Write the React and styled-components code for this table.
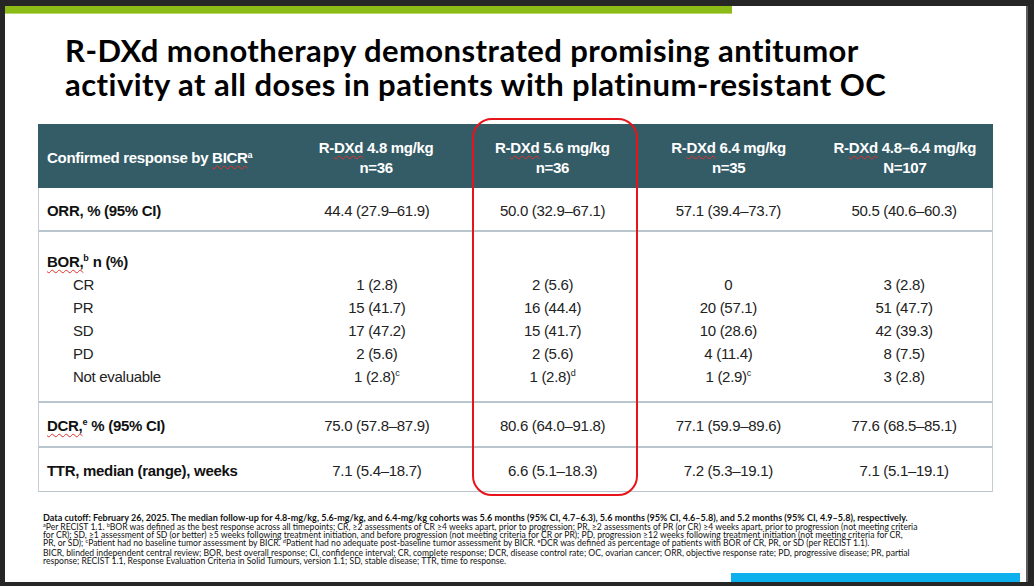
import React from "react";
import styled, { createGlobalStyle } from "styled-components";

const Global = createGlobalStyle`
  html, body { margin: 0; padding: 0; background: #262626; }
  body {
    width: 1034px; height: 586px; overflow: hidden;
    font-family: "Liberation Sans", Arial, sans-serif;
  }
`;

const Frame = styled.div`
  width: 1034px;
  height: 586px;
  box-sizing: border-box;
  padding: 6px 8px 4px 5px;
  display: flex;
`;

const Slide = styled.div`
  flex: 1;
  background: #fff;
  display: flex;
  flex-direction: column;
  box-shadow: 2px 0 0 #5e5e5e;
`;

const GreenBar = styled.div`
  width: 727px;
  height: 7px;
  background: #8cba17;
  border-bottom: 1px solid #b7d66e;
`;

const Title = styled.h1`
  margin: 19px 0 0 60px;
  font-family: Lato, "Open Sans", sans-serif;
  font-weight: 700;
  font-size: 31px;
  letter-spacing: 0.45px;
  line-height: 34px;
  color: #000;
`;

const TableWrap = styled.div`
  position: relative;
  margin: 23px 0 0 33px;
  width: 955px;
`;

const cols = "250px repeat(4, 1fr)";

const Head = styled.div`
  display: grid;
  grid-template-columns: ${cols};
  height: 64px;
  background: #345c67;
  color: #fff;
  font-weight: 700;
  font-size: 15px;
  letter-spacing: -0.3px;
`;

const HeadCell = styled.div`
  display: flex;
  align-items: center;
  justify-content: ${(p) => (p.$label ? "flex-start" : "center")};
  padding: 4px 0 0 ${(p) => (p.$label ? "9px" : "0")};
  text-align: center;
  line-height: 20px;
`;

const Body = styled.div`
  border-left: 1px solid #c4cdd4;
  border-right: 1px solid #c4cdd4;
`;

const Row = styled.div`
  display: grid;
  grid-template-columns: ${cols};
  height: ${(p) => p.$h}px;
  box-sizing: border-box;
  border-bottom: ${(p) => (p.$last ? 1 : 2)}px solid #bac6ce;
  font-size: 15px;
  letter-spacing: -0.3px;
  color: #1c1c1c;
`;

const Cell = styled.div`
  display: flex;
  align-items: center;
  justify-content: ${(p) => (p.$label ? "flex-start" : "center")};
  padding: 2px 0 0 ${(p) => (p.$label ? "8px" : "0")};
  font-weight: ${(p) => (p.$label ? 700 : 400)};
  color: ${(p) => (p.$label ? "#111" : "#222")};
`;

const Stack = styled.div`
  display: flex;
  flex-direction: column;
  align-items: ${(p) => (p.$label ? "flex-start" : "center")};
  padding: 18px 0 0 ${(p) => (p.$label ? "8px" : "0")};
  line-height: 23px;
  color: #222;
`;

const StackHead = styled.div`
  font-weight: 700;
  color: #111;
  height: 23px;
`;

const SubLabel = styled.div`
  padding-left: 26px;
`;

const Sup = styled.sup`
  font-size: ${(p) => p.$size || 9}px;
  line-height: 0;
  vertical-align: ${(p) => p.$raise || 6}px;
  letter-spacing: 0;
`;

const Squiggle = styled.span`
  text-decoration: underline wavy #e0302c;
  text-decoration-thickness: 1px;
  text-underline-offset: 2px;
`;

const Highlight = styled.div`
  position: absolute;
  left: 434px;
  top: -6px;
  width: 166px;
  height: 378px;
  box-sizing: border-box;
  border: 2px solid #e8141b;
  border-radius: 20px;
  pointer-events: none;
`;

const Footnotes = styled.div`
  margin: 21px 0 0 38px;
  font-family: Lato, "Open Sans", sans-serif;
  color: #111;
`;

const FootBold = styled.div`
  font-weight: 700;
  font-size: 9.05px;
  line-height: 10px;
  white-space: nowrap;
`;

const FootPara = styled.div`
  margin-top: ${(p) => p.$gap || 0}px;
`;

const FootLine = styled.div`
  font-size: 8.6px;
  line-height: 8px;
  white-space: nowrap;
`;

const BottomBar = styled.div`
  margin-top: auto;
  margin-left: 726px;
  width: 289px;
  height: 9px;
  background: #0db0ec;
`;

const arms = [
  { dose: "4.8 mg/kg", n: "n=36" },
  { dose: "5.6 mg/kg", n: "n=36" },
  { dose: "6.4 mg/kg", n: "n=35" },
  { dose: "4.8–6.4 mg/kg", n: "N=107" },
];

const orr = ["44.4 (27.9–61.9)", "50.0 (32.9–67.1)", "57.1 (39.4–73.7)", "50.5 (40.6–60.3)"];
const dcr = ["75.0 (57.8–87.9)", "80.6 (64.0–91.8)", "77.1 (59.9–89.6)", "77.6 (68.5–85.1)"];
const ttr = ["7.1 (5.4–18.7)", "6.6 (5.1–18.3)", "7.2 (5.3–19.1)", "7.1 (5.1–19.1)"];

const borLabels = ["CR", "PR", "SD", "PD", "Not evaluable"];
const bor = [
  [["1 (2.8)"], ["15 (41.7)"], ["17 (47.2)"], ["2 (5.6)"], ["1 (2.8)", "c"]],
  [["2 (5.6)"], ["16 (44.4)"], ["15 (41.7)"], ["2 (5.6)"], ["1 (2.8)", "d"]],
  [["0"], ["20 (57.1)"], ["10 (28.6)"], ["4 (11.4)"], ["1 (2.9)", "c"]],
  [["3 (2.8)"], ["51 (47.7)"], ["42 (39.3)"], ["8 (7.5)"], ["3 (2.8)"]],
];

const FS = ({ children }) => (
  <Sup $size={5.5} $raise={3}>
    {children}
  </Sup>
);

export default function App() {
  return (
    <>
      <Global />
      <Frame>
        <Slide>
          <GreenBar />
          <Title>
            R-DXd monotherapy demonstrated promising antitumor
            <br />
            activity at all doses in patients with platinum-resistant OC
          </Title>

          <TableWrap>
            <Head>
              <HeadCell $label>
                <span>
                  Confirmed response by <Squiggle>BICR</Squiggle>
                  <Sup $size={9} $raise={5}>a</Sup>
                </span>
              </HeadCell>
              {arms.map((a) => (
                <HeadCell key={a.dose}>
                  <span>
                    R-<Squiggle>DXd</Squiggle> {a.dose}
                    <br />
                    {a.n}
                  </span>
                </HeadCell>
              ))}
            </Head>
            <Body>
              <Row $h={44}>
                <Cell $label>ORR, % (95% CI)</Cell>
                {orr.map((v) => (
                  <Cell key={v}>{v}</Cell>
                ))}
              </Row>
              <Row $h={171}>
                <Stack $label>
                  <StackHead>
                    <Squiggle>BOR,</Squiggle>
                    <Sup>b</Sup> n (%)
                  </StackHead>
                  {borLabels.map((l) => (
                    <SubLabel key={l}>{l}</SubLabel>
                  ))}
                </Stack>
                {bor.map((col, i) => (
                  <Stack key={i}>
                    <StackHead />
                    {col.map(([v, s], j) => (
                      <div key={j}>
                        {v}
                        {s && <Sup>{s}</Sup>}
                      </div>
                    ))}
                  </Stack>
                ))}
              </Row>
              <Row $h={45}>
                <Cell $label>
                  <span>
                    <Squiggle>DCR,</Squiggle>
                    <Sup>e</Sup> % (95% CI)
                  </span>
                </Cell>
                {dcr.map((v) => (
                  <Cell key={v}>{v}</Cell>
                ))}
              </Row>
              <Row $h={44} $last>
                <Cell $label>TTR, median (range), weeks</Cell>
                {ttr.map((v) => (
                  <Cell key={v}>{v}</Cell>
                ))}
              </Row>
            </Body>
            <Highlight />
          </TableWrap>

          <Footnotes>
            <FootBold>
              Data cutoff: February 26, 2025. The median follow-up for 4.8-mg/kg, 5.6-mg/kg, and 6.4-mg/kg cohorts was 5.6 months (95% CI, 4.7–6.3), 5.6 months (95% CI, 4.6–5.8), and 5.2 months (95% CI, 4.9–5.8), respectively.
            </FootBold>
            <FootPara>
              <FootLine>
                <FS>a</FS>Per RECIST 1.1. <FS>b</FS>BOR was defined as the best response across all timepoints; CR, ≥2 assessments of CR ≥4 weeks apart, prior to progression; PR, ≥2 assessments of PR (or CR) ≥4 weeks apart, prior to progression (not meeting criteria
              </FootLine>
              <FootLine>
                for CR); SD, ≥1 assessment of SD (or better) ≥5 weeks following treatment initiation, and before progression (not meeting criteria for CR or PR); PD, progression ≥12 weeks following treatment initiation (not meeting criteria for CR,
              </FootLine>
              <FootLine>
                PR, or SD); <FS>c</FS>Patient had no baseline tumor assessment by BICR. <FS>d</FS>Patient had no adequate post-baseline tumor assessment by BICR. <FS>e</FS>DCR was defined as percentage of patients with BOR of CR, PR, or SD (per RECIST 1.1).
              </FootLine>
            </FootPara>
            <FootPara $gap={2}>
              <FootLine>
                BICR, blinded independent central review; BOR, best overall response; CI, confidence interval; CR, complete response; DCR, disease control rate; OC, ovarian cancer; ORR, objective response rate; PD, progressive disease; PR, partial
              </FootLine>
              <FootLine>
                response; RECIST 1.1, Response Evaluation Criteria in Solid Tumours, version 1.1; SD, stable disease; TTR, time to response.
              </FootLine>
            </FootPara>
          </Footnotes>

          <BottomBar />
        </Slide>
      </Frame>
    </>
  );
}
